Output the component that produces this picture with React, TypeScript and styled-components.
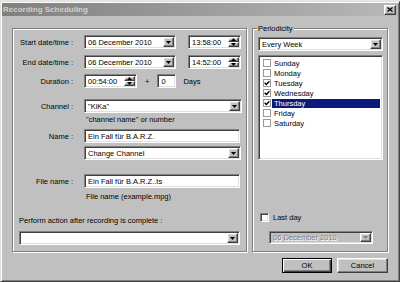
import styled, { createGlobalStyle } from "styled-components";

const GlobalStyle = createGlobalStyle`
  html, body {
    margin: 0;
    padding: 0;
    background: #e6e6e6;
  }
  body {
    font-family: "Liberation Sans", Arial, sans-serif;
    font-size: 7.5px;
    color: #000;
  }
`;

const Window = styled.div`
  box-sizing: border-box;
  margin-top: 1px;
  width: 400px;
  height: 281px;
  padding: 1px;
  background: #c0c0c0;
  border: 1px solid;
  border-color: #dfdfdf #404040 #404040 #dfdfdf;
  box-shadow: inset 1px 1px #fff, inset -1px -1px #808080;
  display: flex;
  flex-direction: column;
`;

const TitleBar = styled.div`
  height: 13px;
  display: flex;
  align-items: center;
  justify-content: space-between;
  background: linear-gradient(to right, #808080, #b8b8b8);
`;

const Title = styled.span`
  padding-left: 1px;
  font-size: 8px;
  font-weight: 700;
  color: #d4d0c8;
`;

const raised = `
  border: 1px solid;
  border-color: #fff #404040 #404040 #fff;
  box-shadow: inset -1px -1px #808080, inset 1px 1px #dfdfdf;
  background: #c0c0c0;
`;

const sunken = `
  border: 1px solid;
  border-color: #808080 #fff #fff #808080;
  box-shadow: inset 1px 1px #404040, inset -1px -1px #dfdfdf;
`;

const CloseButton = styled.div`
  box-sizing: border-box;
  width: 12px;
  height: 10px;
  margin-right: 2px;
  ${raised}
  display: flex;
  align-items: center;
  justify-content: center;
`;

const Body = styled.div`
  flex: 1;
  padding: 12px 10px 0 10px;
  display: flex;
  flex-direction: column;
`;

const Groups = styled.div`
  display: flex;
  gap: 5px;
  height: 224px;
`;

const Group = styled.div<{ $width: number }>`
  position: relative;
  box-sizing: border-box;
  width: ${(p) => p.$width}px;
  border: 1px solid #808080;
  box-shadow: 1px 1px 0 #fff, inset 1px 1px 0 #fff;
  display: flex;
  flex-direction: column;
`;

const LeftGroup = styled(Group)`
  padding-top: 6px;
`;

const RightGroup = styled(Group)`
  padding: 8px 4px 0 5px;
`;

const Caption = styled.span`
  position: absolute;
  top: -5px;
  left: 4px;
  padding: 0 1px;
  line-height: 9px;
  background: #c0c0c0;
`;

const FieldRow = styled.div<{ $top: number }>`
  display: grid;
  grid-template-columns: 60px auto;
  column-gap: 11px;
  align-items: center;
  margin-top: ${(p) => p.$top}px;
  min-height: 10px;
`;

const Label = styled.span`
  text-align: right;
  white-space: nowrap;
`;

const Controls = styled.div<{ $gap?: number }>`
  display: flex;
  align-items: center;
  gap: ${(p) => p.$gap ?? 0}px;
`;

const Hint = styled.span`
  padding-left: 2px;
  line-height: 10px;
  white-space: nowrap;
`;

const Field = styled.div<{ $width: number; $height?: number; $disabled?: boolean }>`
  box-sizing: border-box;
  width: ${(p) => p.$width}px;
  height: ${(p) => p.$height ?? 14}px;
  ${sunken}
  background: ${(p) => (p.$disabled ? "#c0c0c0" : "#fff")};
  color: ${(p) => (p.$disabled ? "#808080" : "#000")};
  text-shadow: ${(p) => (p.$disabled ? "1px 1px 0 #fff" : "none")};
  padding: 1px;
  display: flex;
  align-items: stretch;
`;

const FieldText = styled.span`
  flex: 1;
  padding-left: 2px;
  display: flex;
  align-items: center;
  white-space: nowrap;
  overflow: hidden;
`;

const DropButton = styled.div`
  box-sizing: border-box;
  width: 11px;
  ${raised}
  display: flex;
  align-items: center;
  justify-content: center;
`;

const SpinColumn = styled.div`
  width: 11px;
  display: flex;
  flex-direction: column;
`;

const SpinButton = styled.div`
  box-sizing: border-box;
  flex: 1;
  ${raised}
  display: flex;
  align-items: center;
  justify-content: center;
`;

const Plus = styled.span`
  margin: 0 8px;
`;

const Days = styled.span`
  margin-left: 7px;
`;

const Perform = styled.div`
  margin-top: 14px;
  padding-left: 6px;
  line-height: 10px;
`;

const PerformCombo = styled.div`
  margin: 5px 0 0 6px;
`;

const ListBox = styled.div`
  box-sizing: border-box;
  margin-top: 4px;
  height: 105px;
  ${sunken}
  background: #fff;
  padding: 2px;
  display: flex;
  flex-direction: column;
`;

const ListItem = styled.div`
  height: 10px;
  display: flex;
  align-items: center;
`;

const ItemText = styled.span<{ $selected?: boolean }>`
  flex: 1;
  margin-left: 1px;
  padding-left: 2px;
  line-height: 9px;
  background: ${(p) => (p.$selected ? "#0a1a7a" : "transparent")};
  color: ${(p) => (p.$selected ? "#fff" : "#000")};
`;

const FlatBox = styled.div`
  box-sizing: border-box;
  width: 8px;
  height: 8px;
  margin-left: 2px;
  border: 1px solid #999;
  background: #fff;
  display: flex;
  align-items: center;
  justify-content: center;
`;

const LastDayRow = styled.div`
  margin-top: 52px;
  height: 10px;
  display: flex;
  align-items: center;
  gap: 4px;
  padding-left: 2px;
`;

const SunkenBox = styled.div`
  box-sizing: border-box;
  width: 9px;
  height: 9px;
  ${sunken}
  background: #fff;
`;

const LastDate = styled.div`
  margin: 9px 0 0 11px;
`;

const ButtonRow = styled.div`
  margin-top: 6px;
  display: flex;
  justify-content: flex-end;
  gap: 5px;
`;

const Button = styled.div<{ $default?: boolean; $width: number }>`
  box-sizing: border-box;
  width: ${(p) => p.$width}px;
  height: 15px;
  display: flex;
  align-items: center;
  justify-content: center;
  background: #c0c0c0;
  border: 1px solid;
  border-color: ${(p) => (p.$default ? "#000" : "#fff #404040 #404040 #fff")};
  box-shadow: ${(p) =>
    p.$default
      ? "inset 1px 1px #fff, inset -1px -1px #404040, inset -2px -2px #808080"
      : "inset -1px -1px #808080, inset 1px 1px #dfdfdf"};
`;

const Arrow = ({ up, color = "#000" }: { up?: boolean; color?: string }) => (
  <svg width="5" height="3" viewBox="0 0 5 3">
    <path d={up ? "M0 3 L5 3 L2.5 0 Z" : "M0 0 L5 0 L2.5 3 Z"} fill={color} />
  </svg>
);

const Check = () => (
  <svg width="6" height="6" viewBox="0 0 6 6">
    <path d="M0.6 2.8 L2.3 4.5 L5.4 1.2" stroke="#000" strokeWidth="1.3" fill="none" />
  </svg>
);

const Combo = ({
  width,
  text,
  height,
  disabled,
}: {
  width: number;
  text: string;
  height?: number;
  disabled?: boolean;
}) => (
  <Field $width={width} $height={height} $disabled={disabled}>
    <FieldText>{text}</FieldText>
    <DropButton>
      <Arrow color={disabled ? "#808080" : "#000"} />
    </DropButton>
  </Field>
);

const Spin = ({ width, text }: { width: number; text: string }) => (
  <Field $width={width}>
    <FieldText>{text}</FieldText>
    <SpinColumn>
      <SpinButton>
        <Arrow up />
      </SpinButton>
      <SpinButton>
        <Arrow />
      </SpinButton>
    </SpinColumn>
  </Field>
);

const Input = ({ width, text }: { width: number; text: string }) => (
  <Field $width={width}>
    <FieldText>{text}</FieldText>
  </Field>
);

const days = [
  { name: "Sunday", checked: false },
  { name: "Monday", checked: false },
  { name: "Tuesday", checked: true },
  { name: "Wednesday", checked: true },
  { name: "Thursday", checked: true, selected: true },
  { name: "Friday", checked: false },
  { name: "Saturday", checked: false },
];

export default function App() {
  return (
    <>
      <GlobalStyle />
      <Window>
        <TitleBar>
          <Title>Recording Scheduling</Title>
          <CloseButton>
            <svg width="6" height="5" viewBox="0 0 6 5">
              <path d="M0.5 0.5 L5.5 4.5 M5.5 0.5 L0.5 4.5" stroke="#000" strokeWidth="1.2" />
            </svg>
          </CloseButton>
        </TitleBar>
        <Body>
          <Groups>
            <LeftGroup $width={235}>
              <FieldRow $top={0}>
                <Label>Start date/time :</Label>
                <Controls $gap={12}>
                  <Combo width={92} text="06 December 2010" />
                  <Spin width={53} text="13:58:00" />
                </Controls>
              </FieldRow>
              <FieldRow $top={6}>
                <Label>End date/time :</Label>
                <Controls $gap={12}>
                  <Combo width={92} text="06 December 2010" />
                  <Spin width={53} text="14:52:00" />
                </Controls>
              </FieldRow>
              <FieldRow $top={5}>
                <Label>Duration :</Label>
                <Controls>
                  <Spin width={53} text="00:54:00" />
                  <Plus>+</Plus>
                  <Input width={19} text="0" />
                  <Days>Days</Days>
                </Controls>
              </FieldRow>
              <FieldRow $top={11}>
                <Label>Channel :</Label>
                <Combo width={158} text={"\"KiKa\""} />
              </FieldRow>
              <FieldRow $top={2}>
                <span />
                <Hint>{"\"channel name\" or number"}</Hint>
              </FieldRow>
              <FieldRow $top={4}>
                <Label>Name :</Label>
                <Input width={156} text="Ein Fall für B.A.R.Z." />
              </FieldRow>
              <FieldRow $top={3}>
                <span />
                <Combo width={157} text="Change Channel" />
              </FieldRow>
              <FieldRow $top={14}>
                <Label>File name :</Label>
                <Input width={156} text="Ein Fall für B.A.R.Z..ts" />
              </FieldRow>
              <FieldRow $top={4}>
                <span />
                <Hint>File name (example.mpg)</Hint>
              </FieldRow>
              <Perform>Perform action after recording is complete :</Perform>
              <PerformCombo>
                <Combo width={221} text="" />
              </PerformCombo>
            </LeftGroup>
            <RightGroup $width={136}>
              <Caption>Periodicity</Caption>
              <Combo width={125} text="Every Week" />
              <ListBox>
                {days.map((d) => (
                  <ListItem key={d.name}>
                    <FlatBox>{d.checked && <Check />}</FlatBox>
                    <ItemText $selected={d.selected}>{d.name}</ItemText>
                  </ListItem>
                ))}
              </ListBox>
              <LastDayRow>
                <SunkenBox />
                <span>Last day</span>
              </LastDayRow>
              <LastDate>
                <Combo width={104} height={13} text="06 December 2010" disabled />
              </LastDate>
            </RightGroup>
          </Groups>
          <ButtonRow>
            <Button $default $width={50}>OK</Button>
            <Button $width={51}>Cancel</Button>
          </ButtonRow>
        </Body>
      </Window>
    </>
  );
}
